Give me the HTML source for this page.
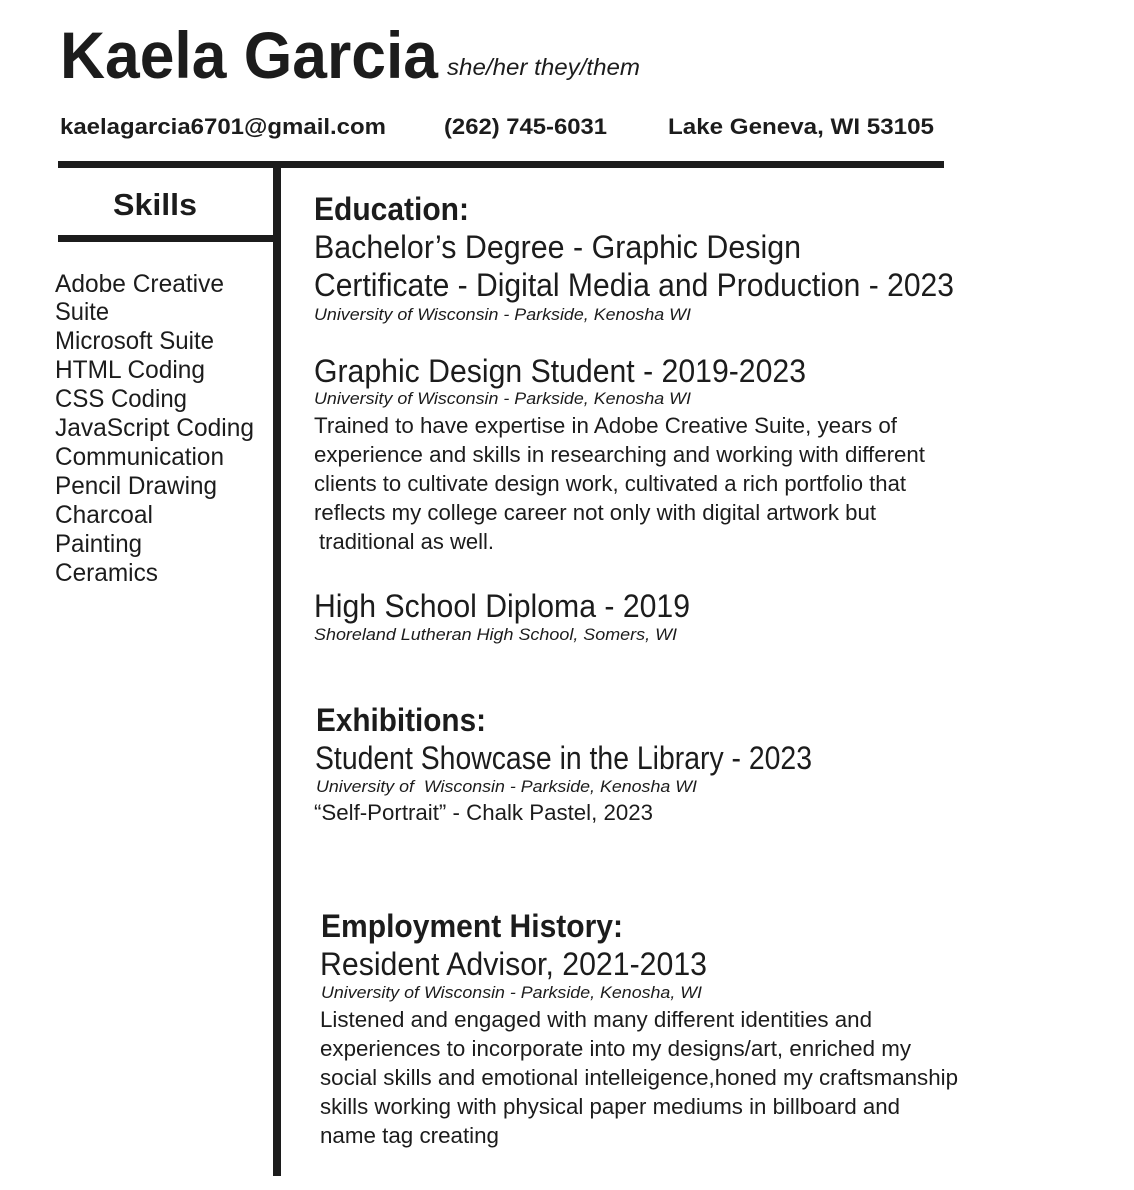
<!DOCTYPE html>
<html><head><meta charset="utf-8"><style>
html,body{margin:0;padding:0;background:#fff;width:1134px;height:1190px;overflow:hidden}
body{position:relative;font-family:"Liberation Sans",Arial,sans-serif;color:#1c1c1c}
.t{position:absolute;white-space:pre;line-height:1;transform-origin:0 0}
.b{font-weight:bold}.i{font-style:italic}
.r{position:absolute;background:#1c1c1c}
</style></head><body>
<div class="r" style="left:58px;top:161px;width:886px;height:7px"></div>
<div class="r" style="left:273px;top:161px;width:8px;height:1015px"></div>
<div class="r" style="left:58px;top:235px;width:217px;height:7px"></div>

<div class="t b" style="left:60px;top:22px;font-size:66px;--w:378">Kaela Garcia</div>
<div class="t i" style="left:447px;top:56px;font-size:23px;--w:193">she/her they/them</div>
<div class="t b" style="left:60px;top:116px;font-size:22px;--w:326">kaelagarcia6701@gmail.com</div>
<div class="t b" style="left:444px;top:116px;font-size:22px;--w:163">(262) 745-6031</div>
<div class="t b" style="left:668px;top:116px;font-size:22px;--w:266">Lake Geneva, WI 53105</div>
<div class="t b" style="left:113px;top:189px;font-size:31px;--w:84">Skills</div>

<div class="t" style="left:55px;top:272px;font-size:25px;--w:169">Adobe Creative</div>
<div class="t" style="left:55px;top:300px;font-size:25px;--w:54">Suite</div>
<div class="t" style="left:55px;top:329px;font-size:25px;--w:159">Microsoft Suite</div>
<div class="t" style="left:55px;top:358px;font-size:25px;--w:150">HTML Coding</div>
<div class="t" style="left:55px;top:387px;font-size:25px;--w:132">CSS Coding</div>
<div class="t" style="left:55px;top:416px;font-size:25px;--w:199">JavaScript Coding</div>
<div class="t" style="left:55px;top:445px;font-size:25px;--w:169">Communication</div>
<div class="t" style="left:55px;top:474px;font-size:25px;--w:162">Pencil Drawing</div>
<div class="t" style="left:55px;top:503px;font-size:25px;--w:98">Charcoal</div>
<div class="t" style="left:55px;top:532px;font-size:25px;--w:87">Painting</div>
<div class="t" style="left:55px;top:561px;font-size:25px;--w:103">Ceramics</div>

<div class="t b" style="left:314px;top:193px;font-size:32px;--w:155">Education:</div>
<div class="t" style="left:314px;top:231px;font-size:32px;--w:487">Bachelor’s Degree - Graphic Design</div>
<div class="t" style="left:314px;top:269px;font-size:32px;--w:640">Certificate - Digital Media and Production - 2023</div>
<div class="t i" style="left:314px;top:306px;font-size:17px;--w:377">University of Wisconsin - Parkside, Kenosha WI</div>
<div class="t" style="left:314px;top:355px;font-size:32px;--w:492">Graphic Design Student - 2019-2023</div>
<div class="t i" style="left:314px;top:390px;font-size:17px;--w:377">University of Wisconsin - Parkside, Kenosha WI</div>
<div class="t" style="left:314px;top:415px;font-size:22px;--w:583">Trained to have expertise in Adobe Creative Suite, years of</div>
<div class="t" style="left:314px;top:444px;font-size:22px;--w:611">experience and skills in researching and working with different</div>
<div class="t" style="left:314px;top:473px;font-size:22px;--w:592">clients to cultivate design work, cultivated a rich portfolio that</div>
<div class="t" style="left:314px;top:502px;font-size:22px;--w:562">reflects my college career not only with digital artwork but</div>
<div class="t" style="left:319px;top:531px;font-size:22px;--w:175">traditional as well.</div>
<div class="t" style="left:314px;top:590px;font-size:32px;--w:376">High School Diploma - 2019</div>
<div class="t i" style="left:314px;top:626px;font-size:17px;--w:363">Shoreland Lutheran High School, Somers, WI</div>

<div class="t b" style="left:316px;top:704px;font-size:32px;--w:170">Exhibitions:</div>
<div class="t" style="left:315px;top:742px;font-size:32px;--w:497">Student Showcase in the Library - 2023</div>
<div class="t i" style="left:316px;top:778px;font-size:17px;--w:381">University of  Wisconsin - Parkside, Kenosha WI</div>
<div class="t" style="left:314px;top:802px;font-size:22px;--w:339">“Self-Portrait” - Chalk Pastel, 2023</div>

<div class="t b" style="left:321px;top:910px;font-size:32px;--w:302">Employment History:</div>
<div class="t" style="left:320px;top:948px;font-size:32px;--w:387">Resident Advisor, 2021-2013</div>
<div class="t i" style="left:321px;top:984px;font-size:17px;--w:381">University of Wisconsin - Parkside, Kenosha, WI</div>
<div class="t" style="left:320px;top:1009px;font-size:22px;--w:552">Listened and engaged with many different identities and</div>
<div class="t" style="left:320px;top:1038px;font-size:22px;--w:591">experiences to incorporate into my designs/art, enriched my</div>
<div class="t" style="left:320px;top:1067px;font-size:22px;--w:638">social skills and emotional intelleigence,honed my craftsmanship</div>
<div class="t" style="left:320px;top:1096px;font-size:22px;--w:580">skills working with physical paper mediums in billboard and</div>
<div class="t" style="left:320px;top:1125px;font-size:22px;--w:179">name tag creating</div>
<script>
document.querySelectorAll('.t').forEach(function(e){
 var w=parseFloat(getComputedStyle(e).getPropertyValue('--w'));
 var a=e.getBoundingClientRect().width;
 if(w&&a){e.style.transform='scaleX('+(w/a)+')';}
});
</script>
</body></html>
